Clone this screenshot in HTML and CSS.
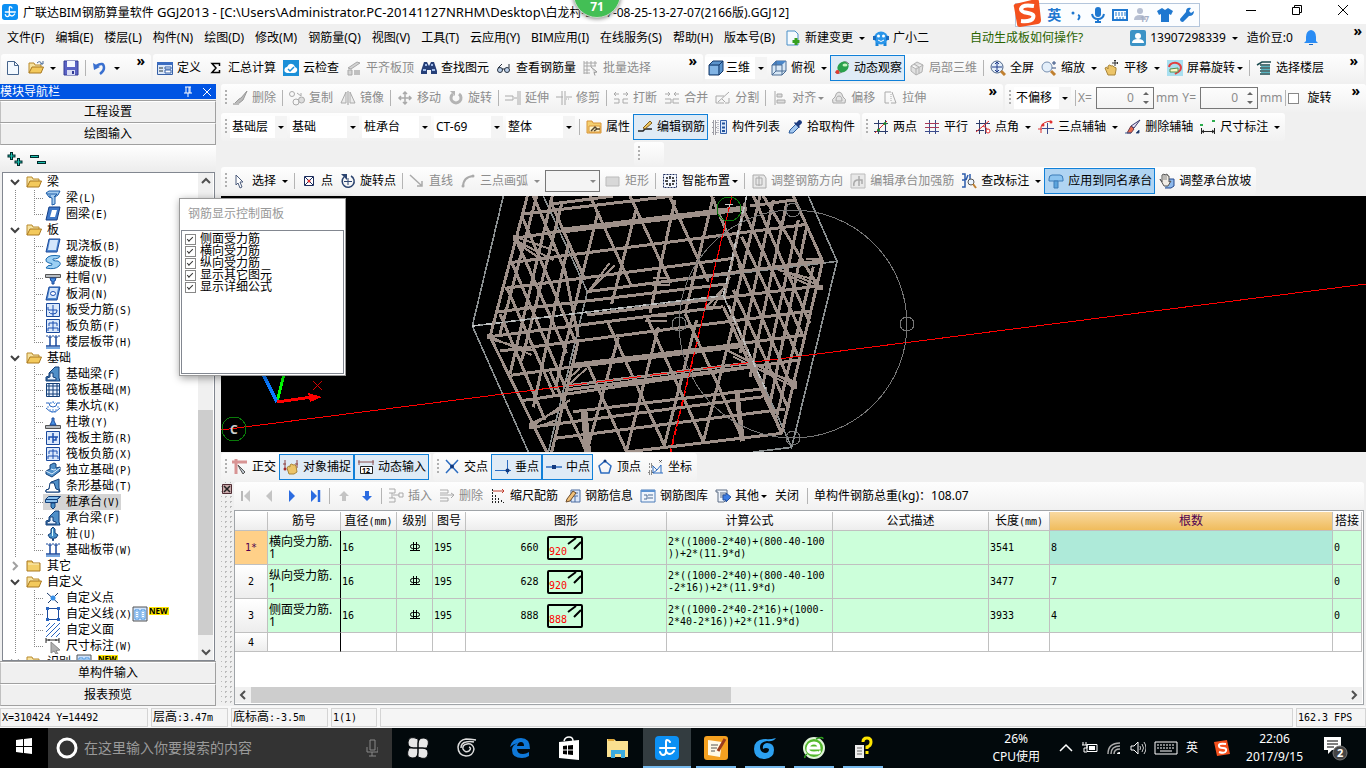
FILE: index.html
```html
<!DOCTYPE html>
<html lang="zh-CN">
<head>
    <meta charset="UTF-8">
    <meta name="viewport" content="width=device-width, initial-scale=1.0">
    <title>广联达BIM钢筋算量软件 GGJ2013</title>
    <link rel="stylesheet" href="styles.css">
</head>
<body>
    <svg class="defs" aria-hidden="true">
        <symbol id="folder" viewBox="0 0 16 16"><path d="M1 13V3h5l1 2h6v3" fill="#f7e3a0" stroke="#b98a2c"/><path d="M1 13l3-6h11.500l-2.500 6z" fill="#f3c95c" stroke="#a97820"/></symbol>
        <symbol id="folder-shut" viewBox="0 0 16 16"><path d="M1 13V3h5l1 2h7v8z" fill="#f3cf6a" stroke="#a97820"/><path d="M2 6h11" stroke="#fdf2c4"/></symbol>
        <symbol id="open" viewBox="0 0 10 10"><path d="M1 3l4 4 4-4" fill="none" stroke="#404040" stroke-width="2"/></symbol>
        <symbol id="shut" viewBox="0 0 10 10"><path d="M3 1l4 4-4 4" fill="none" stroke="#a0a0a0" stroke-width="2"/></symbol>
        <symbol id="slab" viewBox="0 0 16 16"><path d="M4 1h11l-3 13H1z" fill="#4f88d0" stroke="#1b4a9c"/><path d="M5 2h8l-2 10H3z" fill="#d4e6fb"/></symbol>
        <symbol id="strip" viewBox="0 0 16 16"><path d="M1 2h14" stroke="#1b4a9c" stroke-dasharray="2 1"/><path d="M1 12h14M5 3v9M11 3v9" stroke="#1b4a9c" stroke-width="1.500"/><path d="M3 3h4M9 3h4" stroke="#1b4a9c"/><path d="M1 14h14" stroke="#78a8e0" stroke-width="2"/></symbol>
        <symbol id="found-beam" viewBox="0 0 16 16"><path d="M1 15v-4l3-1V7l6-6h4v11l1 3z" fill="#4f8fc8" stroke="#123f78"/><path d="M2 14v-2l3-1V7h3v4l3 1v2z" fill="#eaf4ff" stroke="#123f78"/></symbol>
        <symbol id="rebar" viewBox="0 0 16 16"><path d="M1.500 1.500h13v13h-13z" fill="#dbe9fb" stroke="#1b4a9c"/><path d="M8 3v10M4 10V7h9M11 7v3H8" fill="none" stroke="#1b4fb0" stroke-width="1.500"/></symbol>
        <symbol id="rebar-neg" viewBox="0 0 16 16"><path d="M1.500 1.500h13v13h-13z" fill="#dbe9fb" stroke="#1b4a9c"/><path d="M8 3v10M4 5h8M3 10h10M4 5v3M12 5v3M3 10v3M13 10v3" fill="none" stroke="#1b4fb0"/></symbol>
        <symbol id="hatch" viewBox="0 0 16 16"><path d="M1 5l4-4M1 10l9-9M1 15L15 1M6 15l9-9M11 15l4-4" stroke="#2a66c0"/></symbol>
        <symbol id="new" viewBox="0 0 22 10"><path d="M1 1h20v8H1z" fill="#ffe600"/><text x="1" y="8" font-size="8" font-weight="bold">NEW</text></symbol>
        <symbol id="new-pages" viewBox="0 0 16 16"><path d="M1 1h14v14H1z" fill="#cfe2fa" stroke="#555"/><path d="M3 4h4v9H3zM9 4h4v9H9z" fill="#fff" stroke="#3a8ee0"/><path d="M5 5v7M11 5v7" stroke="#3a8ee0" stroke-dasharray="1 1"/></symbol>
        <symbol id="anchor" viewBox="0 0 24 24"><rect width="24" height="24" rx="4" fill="#0c90f4"/><path d="M15 6q-1-2-3-2-1 0-1 2v9q0 4-3 4-2 0-3-3M5 12h15M11 15q1 3 4 3 2 0 4-3" fill="none" stroke="#fff" stroke-width="2" stroke-linecap="round"/></symbol>
        <symbol id="grade" viewBox="0 0 12 12"><path d="M4.500 1v9M7.500 1v9M1 9.500h10" stroke="#000"/><rect x="1.500" y="3.500" width="9" height="4" rx="2" fill="none" stroke="#000"/></symbol>
    </svg>

    <header class="titlebar">
        <svg><use href="#anchor"/></svg>
        <h1>广联达BIM钢筋算量软件 <b>GGJ2013 - [C:\Users\Administrator.PC-20141127NRHM\Desktop\</b>白龙村-2017-08-25-13-27-07(2166版).GGJ12]</h1>
        <div class="window-buttons">
            <button aria-label="最小化"><svg viewBox="0 0 12 12"><path d="M1 6.500h10" stroke="#000"/></svg></button>
            <button aria-label="还原"><svg viewBox="0 0 12 12"><path d="M1.500 3.500h7v7h-7zM3.500 3V1.500h7v7H9" fill="none" stroke="#000"/></svg></button>
            <button aria-label="关闭"><svg viewBox="0 0 12 12"><path d="M1 1l10 10M11 1L1 11" stroke="#000"/></svg></button>
        </div>
    </header>
    <div class="speed-ball">71</div>
    <div class="ime-bar">
        <svg class="ime-logo" viewBox="0 0 28 28"><path d="M2 5L23 0q3 0 3 3l2 18q0 3-3 4L7 28q-3 0-3-3L1 8q-1-2 1-3z" fill="#f4511e"/><path d="M21 7q-12-2-13 3 0 3 7 4t5 5-12 3" fill="none" stroke="#fff" stroke-width="4"/></svg>
        <b>英</b>
        <svg viewBox="0 0 16 16"><circle cx="5" cy="6" r="1.500" fill="#1f78d0"/><path d="M10 8q3 1 0 5" fill="none" stroke="#1f78d0" stroke-width="2"/></svg>
        <svg viewBox="0 0 16 16"><rect x="5" y="0" width="6" height="10" rx="3" fill="#1f78d0"/><path d="M2 7q1 5 6 5t6-5M8 12v4M5 15h6" fill="none" stroke="#1f78d0" stroke-width="2"/></svg>
        <svg viewBox="0 0 16 16"><path d="M1 3h14v10H1z" fill="none" stroke="#1f78d0" stroke-width="2"/><path d="M3 6h11M3 8h11M4 11h8" stroke="#1f78d0" stroke-dasharray="2 1"/></svg>
        <svg viewBox="0 0 16 16"><circle cx="6" cy="4" r="3" fill="#b6bfd2"/><path d="M0 13q0-5 6-5t6 5z" fill="#b6bfd2"/><text x="6" y="15" font-size="8" font-weight="bold" fill="#a4afc6">17</text></svg>
        <svg viewBox="0 0 16 16"><path d="M5 1l3 2 3-2 5 3-2 4-2-1v8H4V7L2 8 0 4z" fill="#1f78d0"/></svg>
        <svg viewBox="0 0 16 16"><path d="M15 4l-3 2-2-2 2-3q-5-1-5 4L1 12q0 3 3 3l6-6q5 0 5-5z" fill="#1f78d0"/></svg>
    </div>

    <nav class="menubar">
        <button>文件(F)</button><button>编辑(E)</button><button>楼层(L)</button><button>构件(N)</button><button>绘图(D)</button><button>修改(M)</button><button>钢筋量(Q)</button><button>视图(V)</button><button>工具(T)</button><button>云应用(Y)</button><button>BIM应用(I)</button><button>在线服务(S)</button><button>帮助(H)</button><button>版本号(B)</button>
        <button class="tool"><svg viewBox="0 0 16 16"><path d="M2 1h8l3 3v11H2z" fill="#f4faff" stroke="#4a90c8"/><path d="M11 8v7M7.500 11.500h7" stroke="#35a020" stroke-width="3"/></svg>新建变更<i class="caret"></i></button>
        <button class="tool"><svg viewBox="0 0 16 16"><path d="M4 12v4M12 12v4" stroke="#1a84d8" stroke-width="3"/><ellipse cx="8" cy="8" rx="7" ry="6.500" fill="#2a96ea"/><path d="M0 6h3v4H0zM13 6h3v4h-3z" fill="#1a6cc0"/><circle cx="5.500" cy="6" r="1.500" fill="#fff"/><circle cx="10.500" cy="6" r="1.500" fill="#fff"/><path d="M5 10q3 3 6 0" fill="none" stroke="#fff"/></svg>广小二</button>
        <a class="tip" href="#">自动生成板如何操作?</a>
        <button class="tool"><svg viewBox="0 0 16 16"><rect width="16" height="16" rx="2" fill="#3c93c6"/><circle cx="8" cy="6" r="3" fill="#fff"/><path d="M2 13q0-4 6-4t6 4z" fill="#fff"/></svg>13907298339<i class="caret"></i></button>
        <button>造价豆:0</button>
        <button class="tool" aria-label="消息"><svg viewBox="0 0 16 16"><path d="M8 0q5 1 5 7v4l2 2H1l2-2V7q0-6 5-7z" fill="#2a8cf4"/><path d="M6 14h4v1H6z" fill="#1668c8"/></svg></button>
        <span class="more">»</span>
    </nav>

    <div class="top-row">
        <div class="toolbar file-bar">
            <button class="tool" aria-label="新建"><svg viewBox="0 0 16 16"><path d="M2.500 1.500h7l4 4v9h-11z" fill="#f3f9ff" stroke="#46648c"/><path d="M9.500 1.500v4h4" fill="none" stroke="#46648c"/></svg></button>
            <button class="tool" aria-label="打开"><svg viewBox="0 0 16 16"><use href="#folder"/><path d="M9 3q3-3 5 1M12 4h3V1" fill="none" stroke="#4a6a94"/></svg><i class="caret"></i></button>
            <button class="tool" aria-label="保存"><svg viewBox="0 0 16 16"><path d="M1 1h14v14H1z" fill="#5a62c4" stroke="#323a94"/><path d="M4 1h8v6H4z" fill="#f4f6ff"/><path d="M4 10h8v5H4z" fill="#d8dcf4"/><path d="M9 11h2v3H9z" fill="#323a94"/></svg></button>
            <i class="sep"></i>
            <button class="tool" aria-label="撤销"><svg viewBox="0 0 16 16"><path d="M4 6q8-5 8 2 0 3-4 6" fill="none" stroke="#3a70d0" stroke-width="2.500"/><path d="M1 3l1 7 6-3z" fill="#3a70d0"/></svg><i class="caret"></i></button>
            <span class="more">»</span>
        </div>
        <div class="toolbar build-bar">
            <button class="tool"><svg viewBox="0 0 16 16"><path d="M.5 2.500h15v12H.5z" fill="#dce8fa" stroke="#3560a8"/><path d="M0 2h16v3H0z" fill="#3b6cc0"/><path d="M2 8h4M2 11h4" stroke="#233"/><path d="M8 7h6v2H8zM8 10h6v3H8z" fill="#fff" stroke="#3560a8"/></svg>定义</button>
            <button class="tool"><svg viewBox="0 0 16 16"><path d="M11.500 6V3.500H4L8 8l-4 4.500h7.500V10" fill="none" stroke="#000" stroke-width="1.500"/></svg>汇总计算</button>
            <button class="tool"><svg viewBox="0 0 16 16"><rect width="16" height="16" fill="#1b8fd8"/><path d="M4 13q-4-1-2-5 1-1 2-1 2-4 5-3 2 0 3 3 3 1 2 4-1 2-3 2z" fill="#fff"/><path d="M5 9l2 2 4-4" fill="none" stroke="#1b8fd8" stroke-width="1.500"/></svg>云检查</button>
            <button class="tool" disabled><svg viewBox="0 0 16 16"><path d="M2 8l9-6 3 1-9 6zM2 10h4v5H2z" fill="#d4d4d4" stroke="#a8a8a8"/><path d="M8 10h6v5H8z" fill="#c0c0c0"/></svg>平齐板顶</button>
            <button class="tool"><svg viewBox="0 0 16 16"><path d="M3 2h3l2 4 2-4h3l3 9v3h-6v-4H6v4H0v-3z" fill="#263f78"/><path d="M2 10h3M11 10h3M4 5h2M10 5h2" stroke="#9cb8e8" stroke-width="2"/></svg>查找图元</button>
            <button class="tool"><svg viewBox="0 0 16 16"><circle cx="4" cy="10" r="2.500" fill="#bcd0ea" stroke="#26303e"/><circle cx="11" cy="10" r="2.500" fill="#bcd0ea" stroke="#26303e"/><path d="M6 9h3M2 8l4-4M13 8V4" fill="none" stroke="#26303e"/></svg>查看钢筋量</button>
            <button class="tool" disabled><svg viewBox="0 0 16 16"><path d="M1 1v13M4 1v13M8 1v6M12 1v5M1 3h13M1 6h12M1 10h6M1 13h6" stroke="#a8a8a8"/><path d="M8 7l6 5-3 .5 1 3" fill="#ddd" stroke="#999"/></svg>批量选择</button>
            <span class="more">»</span>
        </div>
        <div class="toolbar view-bar">
            <label class="combo with-icon"><svg viewBox="0 0 16 16"><path d="M1 5l4-4h10v10l-4 4H1z" fill="#5c94cc" stroke="#173a6a"/><path d="M2 6h8v8H2z" fill="#82b4e4"/><path d="M1 5h10l4-4M11 5v10" fill="none" stroke="#173a6a"/></svg><select aria-label="视图维度"><option>三维</option></select></label>
            <button class="tool"><svg viewBox="0 0 16 16"><path d="M1 5l4-4h10v10l-4 4H1z" fill="#d8e8f6" stroke="#4a6c94"/><path d="M1 5l4-4h10l-4 4z" fill="#4a86c8"/><path d="M1 5h10v10M5 1v10l-4 4M5 11h10" fill="none" stroke="#4a6c94"/></svg>俯视<i class="caret"></i></button>
            <button class="tool active"><svg viewBox="0 0 16 16"><path d="M1 12q4 3 8-1M8 3q4-3 7 1" fill="none" stroke="#777"/><ellipse cx="9" cy="7" rx="6" ry="5" transform="rotate(-40 9 7)" fill="#2aa04c"/><ellipse cx="11" cy="5" rx="2.500" ry="1.500" fill="#c4f4c0"/><circle cx="3.500" cy="12" r="2" fill="#e03c30"/></svg>动态观察</button>
            <button class="tool" disabled><svg viewBox="0 0 16 16"><path d="M2 6l6-4 6 3-1 7-6 3-5-4zM2 6l5 3 7-4M7 9v6M5 4l5 3v6" fill="#e0e0e0" stroke="#b0b0b0"/></svg>局部三维</button>
            <i class="sep"></i>
            <button class="tool"><svg viewBox="0 0 16 16"><circle cx="7" cy="7" r="6" fill="#e4effa" stroke="#4c6488"/><path d="M7 2v10M2 7h10M5 4l2-2 2 2M5 10l2 2 2-2" fill="none" stroke="#203c8c"/><path d="M11 11l4 4" stroke="#c08030" stroke-width="3"/></svg>全屏</button>
            <button class="tool"><svg viewBox="0 0 16 16"><circle cx="6" cy="7" r="5" fill="#e4effa" stroke="#7890b0"/><path d="M10 11l4 4" stroke="#c08030" stroke-width="3"/><path d="M11 3h4M13 1v4M11 8h4" stroke="#304c80"/></svg>缩放<i class="caret"></i></button>
            <button class="tool"><svg viewBox="0 0 16 16"><path d="M1 8q2-2 3 1V6q2-2 3 0 2-1 3 1 3 0 2 3l-1 5H4z" fill="#ecc468" stroke="#a88438"/><path d="M11 0v6M8 3h6M10 1l1-1 1 1M13 2l1 1-1 1" fill="none" stroke="#333"/></svg>平移<i class="caret"></i></button>
            <button class="tool"><svg viewBox="0 0 16 16"><path d="M0 0h16v16H0z" fill="#a8dff0"/><path d="M2 7a6 5 0 1 1 9 5l-3 2" fill="none" stroke="#e04040" stroke-width="2"/><path d="M3 9l8-1v4H3z" fill="#fff7c8" stroke="#57904c"/></svg>屏幕旋转<i class="caret tight"></i></button>
            <i class="sep"></i>
            <button class="tool"><svg viewBox="0 0 16 16"><path d="M1 5l5-3h9M4 5h10M4 8h10M4 11h10M4 14h10" fill="none" stroke="#1d4c50" stroke-width="1.500"/><path d="M5 6.500h9M5 9.500h9M5 12.500h9" stroke="#58b4c0"/></svg>选择楼层</button>
            <span class="more">»</span>
        </div>
    </div>

    <main>
        <aside class="nav-panel">
            <h2>模块导航栏<svg viewBox="0 0 32 12"><path d="M3 1h6M4 1v6M8 1v6M7 1v6M2 7h8M6 7v4" stroke="#fff"/><path d="M21 2l8 8M29 2l-8 8" stroke="#fff"/></svg></h2>
            <button class="module">工程设置</button>
            <button class="module">绘图输入</button>
            <div class="tree-tools">
                <button aria-label="展开"><svg viewBox="0 0 16 16"><path d="M4.500 1v8M.5 5h8M11.500 7v8M7.500 11h8" stroke="#002a2a" stroke-width="3"/><path d="M4.500 2v6M1.500 5h6M11.500 8v6M8.500 11h6" stroke="#1cc0b0"/></svg></button>
                <button aria-label="折叠"><svg viewBox="0 0 16 16"><path d="M0 5.500h9M7 11.500h9" stroke="#002a2a" stroke-width="3"/><path d="M1 5.500h7M8 11.500h7" stroke="#1cc0b0"/></svg></button>
            </div>
            <div class="tree-frame">
                <ul class="tree">
                    <li class="group"><svg class="fold"><use href="#open"/></svg><svg><use href="#folder"/></svg>梁</li>
                    <li><a href="#"><svg viewBox="0 0 16 16"><path d="M1 3l3-2h11l-2 4-3 2v7l-3 1V8L4 7z" fill="#a4ccf0" stroke="#1c5ca8"/><path d="M2 4h10l-3 3M5 5v3" fill="none" stroke="#1c5ca8"/></svg>梁<b>(L)</b></a></li>
                    <li class="end"><a href="#"><svg viewBox="0 0 16 16"><path d="M4 1h11l-3 13H1z" fill="#3f78c8" stroke="#123f88"/><path d="M7 4h5l-2 7H5z" fill="#fff"/></svg>圈梁<b>(E)</b></a></li>
                    <li class="group"><svg class="fold"><use href="#open"/></svg><svg><use href="#folder"/></svg>板</li>
                    <li><a href="#"><svg><use href="#slab"/></svg>现浇板<b>(B)</b></a></li>
                    <li><a href="#"><svg viewBox="0 0 16 16"><path d="M1 5q3-5 14-3-1 3-7 3-1 2 5 2 4 2 1 5-4 4-13 2 1-3 6-3 1-2-3-2-4-1-3-4z" fill="#9cd0f4" stroke="#1c6cb0"/></svg>螺旋板<b>(B)</b></a></li>
                    <li><a href="#"><svg viewBox="0 0 16 16"><path d="M0.500 4.500h15v3H.5z" fill="#b8bcc0" stroke="#555"/><path d="M5 8h6l-1 3H9v3H7v-3H6z" fill="#4890e0" stroke="#1b4a9c"/></svg>柱帽<b>(V)</b></a></li>
                    <li><a href="#"><svg viewBox="0 0 16 16"><use href="#slab"/><ellipse cx="8" cy="7.500" rx="2.500" ry="2" fill="#fff" stroke="#1b4fb0"/></svg>板洞<b>(N)</b></a></li>
                    <li><a href="#"><svg viewBox="0 0 16 16"><path d="M1.500 1.500h13v13h-13z" fill="#dbe9fb" stroke="#1b4a9c"/><path d="M8 3v11M3 5v3h9v1q0 3-4 3-3 0-4-2" fill="none" stroke="#1b4fb0"/></svg>板受力筋<b>(S)</b></a></li>
                    <li><a href="#"><svg><use href="#rebar-neg"/></svg>板负筋<b>(F)</b></a></li>
                    <li class="end"><a href="#"><svg><use href="#strip"/></svg>楼层板带<b>(H)</b></a></li>
                    <li class="group"><svg class="fold"><use href="#open"/></svg><svg><use href="#folder"/></svg>基础</li>
                    <li><a href="#"><svg><use href="#found-beam"/></svg>基础梁<b>(F)</b></a></li>
                    <li><a href="#"><svg viewBox="0 0 16 16"><path d="M1.500 1.500h13v13h-13z" fill="#e8f2ff" stroke="#123f78"/><path d="M4 2v12M8 2v12M12 2v12M2 4h12M2 8h12M2 12h12" stroke="#123f78"/></svg>筏板基础<b>(M)</b></a></li>
                    <li><a href="#"><svg viewBox="0 0 16 16"><path d="M1 5h3q0 4 4 4t4-4h3M1 10q7 8 14 0" fill="none" stroke="#2a66c0"/><path d="M3 8v3M4 12h9M6 14h5M13 8v3M5 4l1 2 2-3 1 3 2-2" fill="none" stroke="#5c94dc" stroke-dasharray="2 1"/></svg>集水坑<b>(K)</b></a></li>
                    <li><a href="#"><svg viewBox="0 0 16 16"><path d="M.5 11.500h15v3H.5z" fill="#b8bcc0" stroke="#555"/><path d="M7 4h2v3l2 4H5l2-4z" fill="#4890e0" stroke="#1b4a9c"/></svg>柱墩<b>(Y)</b></a></li>
                    <li><a href="#"><svg><use href="#rebar"/></svg>筏板主筋<b>(R)</b></a></li>
                    <li><a href="#"><svg><use href="#rebar-neg"/></svg>筏板负筋<b>(X)</b></a></li>
                    <li><a href="#"><svg viewBox="0 0 16 16"><path d="M1 9l4-2V3l4-2 2 1v4l4-1v4l-8 6-6-3z" fill="#4f8fc8" stroke="#123f78"/><path d="M1 9l6 3 8-6M6 7l3 1 2-1" fill="none" stroke="#e0f0ff"/></svg>独立基础<b>(P)</b></a></li>
                    <li><a href="#"><svg viewBox="0 0 16 16"><path d="M9 3l5-2v9l1 4H1v-2l3-1 2-7z" fill="#4f8fc8" stroke="#123f78"/><path d="M5 5h4l2 6 3 1v2H1v-2l3-1z" fill="#fff" stroke="#123f78"/></svg>条形基础<b>(T)</b></a></li>
                    <li><a class="selected" href="#"><svg viewBox="0 0 16 16"><path d="M.5 5.500l3-3h12l-3 3v3H.5z" fill="#8cc0ec" stroke="#123f78"/><path d="M1 5.500h11l3-3" fill="none" stroke="#123f78"/><path d="M6 9h4v4l-2 2-2-2z" fill="#4890c8" stroke="#123f78"/></svg>桩承台<b>(V)</b></a></li>
                    <li><a href="#"><svg><use href="#found-beam"/></svg>承台梁<b>(F)</b></a></li>
                    <li><a href="#"><svg viewBox="0 0 16 16"><path d="M6 3l2-2 2 2v4l3 2-2 3H9l-1 3-1-3H5L3 9l3-2z" fill="#4890c8" stroke="#123f78"/><path d="M7.500 3v7" stroke="#dff"/></svg>桩<b>(U)</b></a></li>
                    <li class="end"><a href="#"><svg><use href="#strip"/></svg>基础板带<b>(W)</b></a></li>
                    <li class="group"><svg class="fold"><use href="#shut"/></svg><svg><use href="#folder-shut"/></svg>其它</li>
                    <li class="group"><svg class="fold"><use href="#open"/></svg><svg><use href="#folder"/></svg>自定义</li>
                    <li><a href="#"><svg viewBox="0 0 16 16"><path d="M2 3l11 10M13 3L3 13" stroke="#1c3c6c"/><circle cx="8" cy="8" r="2.500" fill="#3890e8"/></svg>自定义点</a></li>
                    <li><a href="#"><svg viewBox="0 0 16 16"><path d="M2.500 2.500h11v11h-11z" fill="#fff" stroke="#1b4a9c"/><path d="M1 1h3v3H1zM12 1h3v3h-3zM1 12h3v3H1zM12 12h3v3h-3z" fill="#2a66c0"/></svg>自定义线<b>(X)</b><svg><use href="#new-pages"/></svg><svg class="new"><use href="#new"/></svg></a></li>
                    <li><a href="#"><svg><use href="#hatch"/></svg>自定义面</a></li>
                    <li class="end"><a href="#"><svg viewBox="0 0 16 16"><path d="M1 0v5M14 0v5M1 2h13M4 1v2M11 1v2" stroke="#222"/><path d="M6 4l9 8-4 .5 2 3.500-2 0-2-3-3 2z" fill="#b0b0b0" stroke="#888"/></svg>尺寸标注<b>(W)</b></a></li>
                    <li class="group"><svg class="fold"><use href="#open"/></svg><svg><use href="#folder"/></svg>识别<svg><use href="#new-pages"/></svg><svg class="new"><use href="#new"/></svg></li>
                </ul>
                <div class="v-scroll">
                    <svg viewBox="0 0 16 16"><path d="M4 10l4-4 4 4" fill="none" stroke="#505050" stroke-width="2"/></svg>
                    <span></span>
                    <svg viewBox="0 0 16 16"><path d="M4 6l4 4 4-4" fill="none" stroke="#505050" stroke-width="2"/></svg>
                </div>
            </div>
            <button class="module">单构件输入</button>
            <button class="module">报表预览</button>
        </aside>

        <section class="work">
            <div class="bar-row">
                <div class="toolbar grow">
                    <i class="grip"></i>
                    <button class="tool" disabled><svg viewBox="0 0 16 16"><path d="M15 1L9 8l-2 1-4 4 3 1 5-4z" fill="#bbb" stroke="#999"/><path d="M1 14h6" stroke="#bbb" stroke-width="2"/></svg>删除</button>
                    <i class="sep"></i>
                    <button class="tool" disabled><svg viewBox="0 0 16 16"><circle cx="3" cy="4" r="2.500" fill="none" stroke="#aaa"/><circle cx="7" cy="12" r="3" fill="none" stroke="#aaa"/><circle cx="12.500" cy="10" r="3" fill="#ddd" stroke="#aaa"/><path d="M8 3l4 3v-3" fill="none" stroke="#aaa"/></svg>复制</button>
                    <button class="tool" disabled><svg viewBox="0 0 16 16"><path d="M6 2v11H1zM10 2v11h5z" fill="#ececec" stroke="#aaa"/><path d="M8 1v14" stroke="#999"/></svg>镜像</button>
                    <i class="sep"></i>
                    <button class="tool" disabled><svg viewBox="0 0 16 16"><path d="M8 2v12M2 8h12M6 4l2-2 2 2M6 12l2 2 2-2M4 6L2 8l2 2M12 6l2 2-2 2" fill="none" stroke="#aaa" stroke-width="1.500"/></svg>移动</button>
                    <button class="tool" disabled><svg viewBox="0 0 16 16"><path d="M5 4a5 5 0 1 0 6 0" fill="none" stroke="#b4b4b4" stroke-width="3"/><path d="M2 1h5v5z" fill="#b4b4b4"/></svg>旋转</button>
                    <i class="sep"></i>
                    <button class="tool" disabled><svg viewBox="0 0 16 16"><path d="M0 6h8v4H0M9 8h3M13 1v14M15 1v14" fill="none" stroke="#aaa"/></svg>延伸</button>
                    <button class="tool" disabled><svg viewBox="0 0 16 16"><path d="M0 7h7M10 7h6M6 1v14M9 1v14" stroke="#aaa"/><path d="M10 9h4" stroke="#aaa" stroke-dasharray="1 1"/></svg>修剪</button>
                    <i class="sep"></i>
                    <button class="tool" disabled><svg viewBox="0 0 16 16"><path d="M1 4h5M10 4h5M3 2L1 4l2 2M13 2l2 2-2 2M1 9h5v4H1M15 9h-5v4h5" fill="none" stroke="#aaa"/></svg>打断</button>
                    <button class="tool" disabled><svg viewBox="0 0 16 16"><path d="M1 4h5M10 4h5M4 2l2 2-2 2M12 2l-2 2 2 2M1 9h6v4H1M15 9H9v4h6" fill="none" stroke="#aaa"/></svg>合并</button>
                    <button class="tool" disabled><svg viewBox="0 0 16 16"><path d="M1 6h8M1 6v7h8M14 8v5h-4M3 12L14 2M7 9l3 3" fill="none" stroke="#aaa"/></svg>分割</button>
                    <i class="sep"></i>
                    <button class="tool" disabled><svg viewBox="0 0 16 16"><path d="M3 1v14" stroke="#aaa"/><path d="M5 4h5v3H5zM5 10h8v3H5z" fill="#ddd" stroke="#aaa"/></svg>对齐<i class="caret tight"></i></button>
                    <button class="tool" disabled><svg viewBox="0 0 16 16"><path d="M2 13q-2-4 2-6 1-5 4-5t4 5q4 2 2 6z" fill="#e4e4e4" stroke="#aaa"/><path d="M5 11q0-5 3-5t3 5z" fill="none" stroke="#aaa"/></svg>偏移</button>
                    <button class="tool" disabled><svg viewBox="0 0 16 16"><path d="M9 2H3v11h4M9 13h5M10 2l4 11" fill="none" stroke="#aaa"/><path d="M9 4v8" stroke="#aaa" stroke-dasharray="1 1"/></svg>拉伸</button>
                    <span class="more">»</span>
                </div>
                <div class="toolbar offset-bar">
                    <i class="grip"></i>
                    <span class="combo narrow"><select aria-label="偏移方式"><option>不偏移</option></select></span>
                    <i class="sep"></i>
                    <label for="off-x">X=</label>
                    <span class="spin"><input id="off-x" value="0" disabled><svg viewBox="0 0 8 16"><path d="M1 5l3-3 3 3zM1 11l3 3 3-3z" fill="#666"/></svg></span>
                    <span class="unit">mm</span>
                    <label for="off-y">Y=</label>
                    <span class="spin"><input id="off-y" value="0" disabled><svg viewBox="0 0 8 16"><path d="M1 5l3-3 3 3zM1 11l3 3 3-3z" fill="#666"/></svg></span>
                    <span>mm</span>
                    <i class="sep"></i>
                    <label class="rotate"><input type="checkbox">旋转</label>
                    <span class="more">»</span>
                </div>
            </div>
            <div class="bar-row">
                <div class="toolbar">
                    <i class="grip"></i>
                    <span class="combo narrow"><select aria-label="楼层"><option>基础层</option></select></span>
                    <span class="combo"><select aria-label="构件类别"><option>基础</option></select></span>
                    <span class="combo"><select aria-label="构件类型"><option>桩承台</option></select></span>
                    <span class="combo"><select aria-label="构件"><option>CT-69</option></select></span>
                    <span class="combo"><select aria-label="单元"><option>整体</option></select></span>
                    <i class="sep"></i>
                    <button class="tool"><svg viewBox="0 0 16 16"><path d="M1 2h5l1 2h8v10H1z" fill="#f4d070" stroke="#d89438"/><path d="M3 7h11v6H3z" fill="#fff4c8" stroke="#d89438"/><path d="M5 12l4-4 2 2h3M8 12l3-2" fill="none" stroke="#54442c" stroke-width="1.500"/></svg>属性</button>
                    <button class="tool active"><svg viewBox="0 0 16 16"><path d="M1 12h5l2-2h7" fill="none" stroke="#222" stroke-width="1.500"/><path d="M6 9l7-7 2 2-7 6z" fill="#f0c860" stroke="#7c5c20"/></svg>编辑钢筋</button>
                    <button class="tool"><svg viewBox="0 0 16 16"><path d="M1 2h3v3H1zM1 7h3v3H1zM1 12h3v3H1z" fill="none" stroke="#445" stroke-dasharray="1 1"/><path d="M6 1v14" stroke="#889" stroke-dasharray="1 1"/><path d="M8.500 1.500h6v13h-6z" fill="#dce8fa" stroke="#3560a8"/><path d="M10 4.500h3M10 8.500h3M10 12h3" stroke="#23539c" stroke-width="2"/></svg>构件列表</button>
                    <button class="tool"><svg viewBox="0 0 16 16"><path d="M2 14l1-3 6-6 3 3-6 6z" fill="#a4c8f0" stroke="#2c5c9c"/><path d="M9 4l3-3q3 0 3 3l-3 3 1 1-1 1-5-5 1-1z" fill="#1c3c80"/></svg>拾取构件</button>
                </div>
                <div class="toolbar">
                    <i class="grip"></i>
                    <button class="tool"><svg viewBox="0 0 16 16"><path d="M5.500 1v14M12.500 1v14M1 4.500h14M1 12.500h14" stroke="#2c3c6c"/><path d="M2 14L14 2" stroke="#e02c2c"/><circle cx="5.500" cy="11" r="1.500" fill="#1c8c2c"/><circle cx="12" cy="4.500" r="1.500" fill="#1c8c2c"/></svg>两点</button>
                    <button class="tool"><svg viewBox="0 0 16 16"><path d="M5.500 1v14M11.500 1v14M1 12.500h14" stroke="#3c4c8c"/><path d="M1 4.500h14M1 8.500h14" stroke="#a83858"/></svg>平行</button>
                    <button class="tool"><svg viewBox="0 0 16 16"><path d="M4.500 1v14M10.500 1v14M1 4.500h14M1 11.500h8" stroke="#2c3c6c"/><path d="M1 13L14 2M8 7q4 1 5 5" fill="none" stroke="#e02c2c"/><circle cx="13" cy="12" r="2" fill="#fff" stroke="#e02c2c"/></svg>点角<i class="caret"></i></button>
                    <button class="tool"><svg viewBox="0 0 16 16"><path d="M9.500 4v11M4 9.500h12" stroke="#3c4c8c"/><path d="M3 14V8q1-5 10-6M0 10h4" fill="none" stroke="#d83030"/><circle cx="13" cy="3" r="1.500" fill="#e03030"/><circle cx="5" cy="6" r="1.500" fill="#e03030"/></svg>三点辅轴<i class="caret"></i></button>
                    <button class="tool"><svg viewBox="0 0 16 16"><path d="M15 1L9 9 6 7z" fill="#e8e0f4" stroke="#3c3c6c"/><path d="M6 7l3 3-3 4-4 0z" fill="#e86c50" stroke="#6c3c4c"/><path d="M0 14h6M11 14l3-3v3z" stroke="#3c5c94"/></svg>删除辅轴</button>
                    <button class="tool"><svg viewBox="0 0 16 16"><path d="M1.500 9v6M14.500 9v6M2 12.500h12M4 11l-2 1.500 2 1.500M12 11l2 1.500-2 1.500" fill="none" stroke="#222"/><path d="M0 5h3v2H0zM12 1h3v2h-3z" fill="#2cac4c"/></svg>尺寸标注<i class="caret"></i></button>
                </div>
            </div>
            <div class="bar-row blank-row"><div class="toolbar"><i class="grip"></i></div></div>
            <div class="bar-row">
                <div class="toolbar">
                    <i class="grip"></i>
                    <button class="tool"><svg viewBox="0 0 16 16"><path d="M4 2l7 7H8l2 5-2 1-2-5-2 2z" fill="#fff" stroke="#4c5c7c"/></svg>选择<i class="caret"></i></button>
                    <i class="sep"></i>
                    <button class="tool"><svg viewBox="0 0 16 16"><path d="M3.500 3.500h9v9h-9z" fill="#fff" stroke="#1c2c5c"/><path d="M4 4l8 8M12 4l-8 8" stroke="#1c2c5c"/><circle cx="8" cy="8" r="1.500" fill="#e02c2c"/></svg>点</button>
                    <button class="tool"><svg viewBox="0 0 16 16"><path d="M11 3a6 6 0 1 1-7 1" fill="none" stroke="#2c4470" stroke-width="1.500"/><path d="M1 1h6v6z" fill="#2c4470"/><path d="M8 5v7M4 8.500h8" stroke="#2c4470"/></svg>旋转点</button>
                    <i class="sep"></i>
                    <button class="tool" disabled><svg viewBox="0 0 16 16"><path d="M1 2l12 11M13 8v5H8" fill="none" stroke="#aaa" stroke-width="1.500"/></svg>直线</button>
                    <button class="tool" disabled><svg viewBox="0 0 16 16"><path d="M3 14Q3 4 13 3" fill="none" stroke="#aaa" stroke-width="2"/><circle cx="3" cy="13" r="1.500" fill="#aaa"/><circle cx="13" cy="3" r="1.500" fill="#aaa"/></svg>三点画弧<i class="caret"></i></button>
                    <span class="combo boxed"><select aria-label="弧参数" disabled><option></option></select></span>
                    <button class="tool" disabled><svg viewBox="0 0 16 16"><path d="M1 4h13v9H1z" fill="#d8d8d8" stroke="#bbb"/></svg>矩形</button>
                    <i class="sep"></i>
                    <button class="tool"><svg viewBox="0 0 16 16"><path d="M1.500 1.500h13v13h-13z" fill="#f4f8ff" stroke="#1c2c5c" stroke-dasharray="2 1"/><path d="M8 3v3M8 10v3M3 8h3M10 8h3M4 5h2M10 5h2M4 11h2M10 11h2" stroke="#111" stroke-width="1.500"/></svg>智能布置<i class="caret tight"></i></button>
                    <i class="sep"></i>
                    <button class="tool" disabled><svg viewBox="0 0 16 16"><path d="M2 2h11l2 3v10H2z" fill="#e8e8e8" stroke="#aaa"/><path d="M5 5h6v7H5zM8 3v10" fill="none" stroke="#aaa"/></svg>调整钢筋方向</button>
                    <button class="tool" disabled><svg viewBox="0 0 16 16"><path d="M1 1h14v14H1z" fill="#e8e8e8" stroke="#bbb"/><path d="M9 3v10M4 13q-1-5 3-6h5v4" fill="none" stroke="#aaa" stroke-width="1.500"/></svg>编辑承台加强筋</button>
                    <button class="tool"><svg viewBox="0 0 16 16"><path d="M1 1h3v13H1M4 7H1M7 2l-2 5M9 1v5" fill="none" stroke="#2c5cac" stroke-width="1.500"/><circle cx="10" cy="9" r="3" fill="#eaf4ff" stroke="#555"/><path d="M12 11l3 4" stroke="#c08030" stroke-width="2"/></svg>查改标注<i class="caret"></i></button>
                    <button class="tool checked"><svg viewBox="0 0 16 16"><path d="M1 6q0-4 3-4h8q3 0 3 4v2H1z" fill="#8cc4f0" stroke="#3c7cb8"/><path d="M6 8h4v7H6z" fill="#5ca4dc" stroke="#3c7cb8"/></svg>应用到同名承台</button>
                    <button class="tool"><svg viewBox="0 0 16 16"><path d="M9 6h6v7l-3 2H6" fill="#8cb8ec" stroke="#24488c"/><path d="M1 6l2 3V2l2-1 1 1 2-1 1 2 1 0v6l2-1-3 5H5z" fill="#f0ece4" stroke="#555"/><path d="M5 2v5M7 2v5" stroke="#888"/></svg>调整承台放坡</button>
                </div>
            </div>

            <svg class="canvas" viewBox="221 196 1145 256" preserveAspectRatio="xMinYMin slice" shape-rendering="crispEdges" fill="none">
                <!-- grid axes -->
                <g stroke="#f00">
                    <path d="M221 430L1366 284"/>
                    <path d="M732 196L670 452"/>
                </g>
                <!-- pile cap outline -->
                <g transform="translate(440 190) scale(.33333)">
                    <path d="M190 18L97 408 265 786M97 408L850 317 1055 772 1191 214 1105 18M850 317L920 18M1055 772L940 786M310 18L442 305 325 786M442 305L1191 214" stroke="#8a8f90" stroke-width="5"/>
                    <!-- rebar cage -->
                    <g stroke="#9e9089" stroke-width="9">
                        <path d="M262 18L150 440 320 786M1060 18L1148 214 1025 730"/>
                        <path d="M335 42L520 18M245 72L700 18M210 218L1100 103M195 295L880 205M442 305L1148 212M175 365L860 282M440 375L1135 288M150 440L850 350M180 483L1110 363M212 556L1090 435M245 632L1075 510M375 600L930 530M375 588L920 520M270 712L970 620M400 665L980 595M345 745L1035 657M560 786L1025 730M930 48L1062 30"/>
                        <path d="M365 122L920 54M400 527L910 465" stroke-width="17"/>
                        <path d="M225 145L370 122"/>
                        <path d="M450 18L575 290M570 18L692 280M688 18L805 275M815 18L910 245M445 528L560 786M500 390L675 770M620 380L790 755M735 370L907 745M850 350L1023 725"/>
                        <path d="M475 62L425 262M590 52L515 342M705 30L630 370M820 20L735 370M915 40L850 330M415 452L335 786M535 442L440 786M655 412L560 780M770 390L672 770M880 400L790 755"/>
                        <path d="M290 18L180 432M337 18L210 552M365 42L245 512M385 162L280 652M425 262L345 600"/>
                        <path d="M280 18L375 242 415 442M330 30L435 270M245 77L405 452M225 142L380 490M215 217L375 590M200 292L345 620M180 372L315 690M330 545L440 786"/>
                        <path d="M940 18L1110 400M970 18L1135 290M910 60L1090 440M905 140L1075 500M895 220L1055 590M880 300L1045 655M865 345L1025 730"/>
                        <path d="M960 18L870 400M1000 30L900 490M1040 40L930 560M1075 90L965 600M1100 110L990 640M1120 230L1010 680"/>
                    </g>
                    <g stroke="#9e9089" stroke-width="6">
                        <path d="M225 150L340 210M230 142L355 185M225 155L300 205M445 305L508 220M450 300L525 226M640 265H690M635 285H690M610 378H680M615 392H680M1010 235L1135 285M1030 250L1130 295M1015 240L1130 270M1098 206H1150M1098 220H1150M150 440L275 495M160 450L280 482M180 480H280M860 480L1060 580M880 500L1060 590M960 540L1065 575M275 710L390 630M275 700L380 650M280 715L350 690M380 590L440 535M370 580L420 535M855 290L800 350M870 260L820 350M830 350H800"/>
                        <path d="M432 660L443 786" stroke-width="20"/>
                        <path d="M890 600L907 754" stroke-width="15"/>
                        <path d="M228 136V154M150 432V448M1140 285V300M275 700V716M1062 572V596" stroke-width="18"/>
                    </g>
                    <path d="M97 408L850 317 980 605M850 317L920 18" stroke="#c0c2c2" stroke-width="5" stroke-dasharray="22 14"/>
                </g>
                <path d="M732 196L671 452" stroke="#f00" stroke-dasharray="6 4"/>
                <path d="M221 430L1366 284" stroke="#f00" stroke-dasharray="18 9"/>
                <!-- orbit control -->
                <g stroke="#777">
                    <circle cx="793" cy="324" r="114"/>
                    <circle cx="907" cy="324" r="7"/>
                    <circle cx="793" cy="438" r="7"/>
                    <circle cx="679" cy="324" r="7"/>
                    <circle cx="793" cy="210" r="7"/>
                </g>
                <!-- axis bubbles -->
                <circle cx="234" cy="429" r="12" stroke="#0a7a0a"/>
                <text x="230" y="434" fill="#ccc" font-size="12" font-weight="bold">C</text>
                <circle cx="729" cy="209" r="12" stroke="#0a7a0a"/>
                <path d="M725 204h8M729 204v3" stroke="#ccc"/>
                <!-- coordinate tripod -->
                <path d="M277 402L284 374" stroke="#0f0" stroke-width="3"/>
                <path d="M277 402L263 374" stroke="#0a7aff" stroke-width="4"/>
                <path d="M277 402L312 397" stroke="#f00" stroke-width="3"/>
                <path d="M308 393L322 397 310 402z" fill="#f00"/>
                <path d="M313 381l9 9M322 381l-9 9" stroke="#d00"/>
            </svg>

            <div class="bar-row snap-row">
                <div class="toolbar">
                    <i class="grip"></i>
                    <button class="tool"><svg viewBox="0 0 16 16"><path d="M0 3h15M4 0v15" stroke="#d89494" stroke-width="3"/><path d="M6 6l7 7-2 2-3-5z" fill="#c0c8d0" stroke="#555"/></svg>正交</button>
                    <button class="tool active"><svg viewBox="0 0 16 16"><path d="M2 1v9M14 1v8M0 5h3M12 5h3" stroke="#8c4040"/><path d="M4 9q1-3 3-1V6q2-2 3 0 2-1 3 1l1 6-3 2H6z" fill="#ecc468" stroke="#a88438"/><circle cx="2" cy="10" r="1.500" fill="#a02c2c"/></svg>对象捕捉</button>
                    <button class="tool active"><svg viewBox="0 0 16 16"><path d="M0 3h16M1 1v5M15 1v5" stroke="#8c5050"/><path d="M2.500 7.500h12v7h-12z" fill="#fff" stroke="#222"/><text x="4" y="14" font-size="7" font-weight="bold" fill="#000">12</text></svg>动态输入</button>
                </div>
                <div class="toolbar">
                    <i class="grip"></i>
                    <button class="tool"><svg viewBox="0 0 16 16"><path d="M2 1l12 13M14 1L2 14" stroke="#2c6cc0" stroke-width="1.500"/><circle cx="8" cy="7.500" r="2" fill="#123a80"/></svg>交点</button>
                    <button class="tool active"><svg viewBox="0 0 16 16"><path d="M12.500 1v14M0 11.500h16" stroke="#2c6cc0"/><circle cx="12.500" cy="11.500" r="2" fill="#123a80"/></svg>垂点</button>
                    <button class="tool active"><svg viewBox="0 0 16 16"><path d="M0 8h16" stroke="#2c6cc0" stroke-width="1.500"/><path d="M6 6h4v4H6z" fill="#123a80"/></svg>中点</button>
                    <button class="tool"><svg viewBox="0 0 16 16"><path d="M8 2l6 5-2 7H4L2 7z" fill="none" stroke="#2c6cc0" stroke-width="1.500"/><circle cx="8" cy="2" r="1.500" fill="#123a80"/></svg>顶点</button>
                    <button class="tool"><svg viewBox="0 0 16 16"><path d="M5 7v7h10M5 7l4 4 4-5v8M5 14l4-3" fill="none" stroke="#2c6cc0"/><path d="M1 5h3v3H1M11 1l3 3M14 1l-3 3M1 12h3v3H1z" fill="none" stroke="#222" stroke-dasharray="1 1"/></svg>坐标</button>
                </div>
            </div>

            <section class="rebar-panel">
                <div class="gutter"><button aria-label="关闭面板"><svg viewBox="0 0 10 10"><path d="M.5.5h9v9h-9z" fill="#c8a8a8" stroke="#502c34"/><path d="M2 2l6 6M8 2L2 8" stroke="#222" stroke-width="1.500"/></svg></button></div>
                <div class="rebar-body">
                    <div class="toolbar">
                        <button class="tool" disabled aria-label="首行"><svg viewBox="0 0 16 16"><path d="M4 3v10" stroke="#b8b8b8" stroke-width="2"/><path d="M12 2v12L6 8z" fill="#c4c4c4"/></svg></button>
                        <button class="tool" disabled aria-label="上一行"><svg viewBox="0 0 16 16"><path d="M11 2v12L5 8z" fill="#c4c4c4"/></svg></button>
                        <button class="tool" aria-label="下一行"><svg viewBox="0 0 16 16"><path d="M5 2v12l6-6z" fill="#2c6ce0"/></svg></button>
                        <button class="tool" aria-label="末行"><svg viewBox="0 0 16 16"><path d="M4 2v12l6-6z" fill="#2c6ce0"/><path d="M12 2v12" stroke="#2c6ce0" stroke-width="2.500"/></svg></button>
                        <i class="sep"></i>
                        <button class="tool" disabled aria-label="上移"><svg viewBox="0 0 16 16"><path d="M8 3l5 5h-3v5H6V8H3z" fill="#c4c4c4"/></svg></button>
                        <button class="tool" aria-label="下移"><svg viewBox="0 0 16 16"><path d="M8 13L3 8h3V3h4v5h3z" fill="#2c6ce0"/></svg></button>
                        <i class="sep"></i>
                        <button class="tool" disabled><svg viewBox="0 0 16 16"><path d="M1 1h6v4H1M1 14h6v-4H1M4 5v5M5 7h6M11 5h4v4h-4z" fill="none" stroke="#aaa"/></svg>插入</button>
                        <button class="tool" disabled><svg viewBox="0 0 16 16"><path d="M1 2h8v3H1M1 7h14M1 13h8v-3H1M12 5l3 2-3 3" fill="none" stroke="#aaa"/></svg>删除</button>
                        <button class="tool"><svg viewBox="0 0 16 16"><path d="M2.500 1v14M5.500 7v8M8.500 10v5M11.500 12v3M13.500 14v1" stroke="#222" stroke-dasharray="2 1"/><path d="M3 3h11M12 1l2 2-2 2" fill="none" stroke="#c03c2c"/></svg>缩尺配筋</button>
                        <button class="tool"><svg viewBox="0 0 16 16"><path d="M6 2h9v12H6z" fill="#dce8fa" stroke="#4c6ca0"/><path d="M8 5h5M8 8h5M10 8v6" stroke="#4c6ca0"/><path d="M2 11l6-8 3 2-6 8-4 1z" fill="#f0c078" stroke="#6c4c2c"/></svg>钢筋信息</button>
                        <button class="tool"><svg viewBox="0 0 16 16"><path d="M1 2h14v12H1z" fill="#eef4fc" stroke="#4c7cb8"/><path d="M1 2h14v2H1z" fill="#5c94d4"/><path d="M4 7h3v4H4M8 7h5M8 10h5" fill="none" stroke="#4c6c94"/></svg>钢筋图库</button>
                        <button class="tool"><svg viewBox="0 0 16 16"><path d="M1 2h11v9l-3 3H3V4H1z" fill="#eef4fc" stroke="#5c6c84"/><path d="M5 5h6M5 7h5M5 9h3" stroke="#5c6c84"/><path d="M8 7h3V5l5 4-5 5v-2H8z" fill="#3c7ce4" stroke="#24509c"/></svg>其他<i class="caret tight"></i></button>
                        <button class="tool plain">关闭</button>
                        <i class="sep"></i>
                        <span class="total">单构件钢筋总重(kg)：108.07</span>
                    </div>
                    <div class="grid-frame">
                        <table>
                            <colgroup><col class="c-row"><col class="c-name"><col class="c-dia"><col class="c-grade"><col class="c-fig"><col class="c-shape"><col class="c-formula"><col class="c-desc"><col class="c-len"><col class="c-count"><col></colgroup>
                            <thead>
                                <tr><th></th><th>筋号</th><th>直径<b>(mm)</b></th><th>级别</th><th>图号</th><th>图形</th><th>计算公式</th><th>公式描述</th><th>长度<b>(mm)</b></th><th class="current">根数</th><th>搭接</th></tr>
                            </thead>
                            <tbody>
                                <tr><th class="current">1*</th><td class="name">横向受力筋.<br>1</td><td class="mono">16</td><td class="center"><svg class="grade"><use href="#grade"/></svg></td><td class="mono">195</td><td><div class="shape">660<svg viewBox="0 0 36 24"><path d="M1 2q0-1 1-1h32q1 0 1 1v20q0 1-1 1H2q-1 0-1-1zM21 8l8-6M27 13l7-7" fill="none" stroke="#000" stroke-width="2"/><text x="2" y="19" fill="red">920</text></svg></div></td><td class="mono">2*((1000-2*40)+(800-40-100<br>))+2*(11.9*d)</td><td></td><td class="mono">3541</td><td class="mono picked">8</td><td class="mono">0</td></tr>
                                <tr><th>2</th><td class="name">纵向受力筋.<br>1</td><td class="mono">16</td><td class="center"><svg class="grade"><use href="#grade"/></svg></td><td class="mono">195</td><td><div class="shape">628<svg viewBox="0 0 36 24"><path d="M1 2q0-1 1-1h32q1 0 1 1v20q0 1-1 1H2q-1 0-1-1zM21 8l8-6M27 13l7-7" fill="none" stroke="#000" stroke-width="2"/><text x="2" y="19" fill="red">920</text></svg></div></td><td class="mono">2*((1000-2*40)+(800-40-100<br>-2*16))+2*(11.9*d)</td><td></td><td class="mono">3477</td><td class="mono">7</td><td class="mono">0</td></tr>
                                <tr><th>3</th><td class="name">侧面受力筋.<br>1</td><td class="mono">16</td><td class="center"><svg class="grade"><use href="#grade"/></svg></td><td class="mono">195</td><td><div class="shape">888<svg viewBox="0 0 36 24"><path d="M1 2q0-1 1-1h32q1 0 1 1v20q0 1-1 1H2q-1 0-1-1zM21 8l8-6M27 13l7-7" fill="none" stroke="#000" stroke-width="2"/><text x="2" y="19" fill="red">888</text></svg></div></td><td class="mono">2*((1000-2*40-2*16)+(1000-<br>2*40-2*16))+2*(11.9*d)</td><td></td><td class="mono">3933</td><td class="mono">4</td><td class="mono">0</td></tr>
                                <tr class="blank"><th>4</th><td></td><td></td><td></td><td></td><td></td><td></td><td></td><td></td><td></td><td></td></tr>
                            </tbody>
                        </table>
                        <div class="h-scroll">
                            <svg viewBox="0 0 16 16"><path d="M10 4L6 8l4 4" fill="none" stroke="#505050" stroke-width="2"/></svg>
                            <span></span>
                            <svg viewBox="0 0 16 16"><path d="M6 4l4 4-4 4" fill="none" stroke="#505050" stroke-width="2"/></svg>
                        </div>
                    </div>
                </div>
            </section>
        </section>
    </main>

    <section class="float-panel">
        <h2>钢筋显示控制面板</h2>
        <div class="checks">
            <label><input type="checkbox" checked>侧面受力筋</label>
            <label><input type="checkbox" checked>横向受力筋</label>
            <label><input type="checkbox" checked>纵向受力筋</label>
            <label><input type="checkbox" checked>显示其它图元</label>
            <label><input type="checkbox" checked>显示详细公式</label>
        </div>
    </section>

    <footer class="statusbar">
        <span class="coords"><b>X=310424 Y=14492</b></span>
        <span class="floor">层高<b>:3.47m</b></span>
        <span class="base">底标高<b>:-3.5m</b></span>
        <span class="count"><b>1(1)</b></span>
        <span class="message"></span>
        <span class="fps"><b>162.3 FPS</b></span>
    </footer>

    <footer class="taskbar">
        <button class="start" aria-label="开始"><svg viewBox="0 0 16 16"><path d="M0 2l7-1v7H0zM8 1l8-1v8H8zM0 9h7v6l-7-1zM8 9h8v7l-8-1z" fill="#fff"/></svg></button>
        <div class="search">
            <svg class="ring" viewBox="0 0 22 22"><circle cx="11" cy="11" r="9" fill="none" stroke="#fff" stroke-width="3"/></svg>
            <input type="text" placeholder="在这里输入你要搜索的内容" aria-label="搜索">
            <svg class="mic" viewBox="0 0 12 18"><path d="M4 1h5v10H4zM1 8v5h11V8M6 13v4M3 17h7" fill="none" stroke="#888"/></svg>
        </div>
        <nav class="apps">
            <button aria-label="风扇"><svg viewBox="0 0 24 24"><path d="M12 12Q1 13 2 6t10-3zM12 12Q11 1 18 2t3 10zM12 12q11-1 10 6t-10 3zM12 12q1 11-6 10T3 12z" fill="#e8e8e8" stroke="#05090c"/></svg></button>
            <button aria-label="螺旋"><svg viewBox="0 0 24 24"><path d="M21 4q-6-1-10-1-7 1-8 8 0 8 8 9 7 0 8-7-1-6-7-5-5 1-4 5 2 4 6 2 3-3 0-4M19 6q-4-1-8 0-5 1-5 6" fill="none" stroke="#ddd" stroke-width="1.500"/></svg></button>
            <i></i>
            <button aria-label="Edge"><svg viewBox="0 0 24 24"><path d="M2 11Q4 2 13 2t9 11H9q0 5 6 5 3 0 6-2v4q-3 2-7 2-10 0-10-8 0-5 6-7-5 1-8 4zM9 10h7q0-4-3-4t-4 4z" fill="#0f78d8" fill-rule="evenodd"/></svg></button>
            <button aria-label="应用商店"><svg viewBox="0 0 24 24"><path d="M7 5q1-4 5-4t4 4" fill="none" stroke="#fff" stroke-width="1.500"/><path d="M2 6l20-2v20l-20-2z" fill="#fff"/><path d="M6 10l4-.5v4H6zM11 9.500l5-.5v4.500h-5zM6 14.500h4v4l-4-.5zM11 14.500h5V19l-5-.5z" fill="#000"/></svg></button>
            <button aria-label="资源管理器"><svg viewBox="0 0 24 24"><path d="M1 3h7l2 2h12v16H1z" fill="#fae090"/><path d="M2 3h6v2H2z" fill="#e0a838"/><path d="M5 14h14v8h-4v-4h-6v4H5z" fill="#3cace0"/></svg></button>
            <button class="current" aria-label="广联达"><svg><use href="#anchor"/></svg></button>
            <button class="running" aria-label="记事本"><svg viewBox="0 0 24 24"><rect width="24" height="24" rx="3" fill="#f4a020"/><path d="M4 4l14 2-2 15-12-2z" fill="#fff8e4"/><path d="M7 9h7M7 12h6M7 15h4" stroke="#555"/><path d="M21 3l-7 12" stroke="#9c3c1c" stroke-width="3"/></svg></button>
            <button class="running" aria-label="广联达G"><svg viewBox="0 0 24 24"><path d="M23 2q-7 2-10 1Q1 3 1 13t11 10q9-1 9-9 0-7-7-7-5 1-4 6 3-2 6 0 0 4-4 4-5-1-5-6 0-5 7-6Q20 6 23 2z" fill="#2ca0f0"/></svg></button>
            <button class="running" aria-label="浏览器"><svg viewBox="0 0 24 24"><circle cx="12" cy="12" r="10" fill="#54b82c" stroke="#e0f4d8" stroke-width="2"/><path d="M6 12h11q0-5-5-5t-6 5 6 5 5-2" fill="none" stroke="#fff" stroke-width="3"/><path d="M3 22Q2 20 5 18M14 3q7-3 7 0" fill="none" stroke="#2c9c1c" stroke-width="1.500"/></svg></button>
            <button class="running" aria-label="帮助"><svg viewBox="0 0 24 24"><path d="M4 9h9v13H4z" fill="#eee"/><path d="M6 12h5M6 15h5M6 18h5" stroke="#666"/><path d="M12 6q0-4 4-4t4 4-4 5v2M16 15v3" fill="none" stroke="#ffe600" stroke-width="3"/></svg></button>
        </nav>
        <div class="tray">
            <span class="cpu">26%<br>CPU使用</span>
            <svg viewBox="0 0 16 16"><path d="M2 11l6-6 6 6" fill="none" stroke="#fff" stroke-width="1.500"/></svg>
            <svg viewBox="0 0 16 16"><path d="M5 4.500h10v7H5z" fill="none" stroke="#fff"/><path d="M7 6h6v4H7z" fill="#fff"/><path d="M1 2v3M4 2v3M0 5h5v3H2v4h3" fill="none" stroke="#fff"/></svg>
            <svg viewBox="0 0 16 16"><path d="M2 14Q2 3 14 3M5 14q0-8 9-8M8 14q0-5 6-5" fill="none" stroke="#aaa" stroke-width="1.500"/><path d="M11 14q0-2 3-2v2z" fill="#fff"/></svg>
            <svg viewBox="0 0 16 16"><path d="M1 6h3l4-4v12l-4-4H1z" fill="none" stroke="#fff"/><path d="M10 6q1 2 0 4M12 4q3 4 0 8M14 2q4 6 0 12" fill="none" stroke="#ccc"/></svg>
            <svg class="kbd" viewBox="0 0 24 14"><path d="M1 1h22v12H1z" fill="none" stroke="#fff"/><path d="M3 4h18M3 7h18" stroke="#fff" stroke-dasharray="2 1"/><path d="M6 10h12" stroke="#fff"/></svg>
            <b class="lang">英</b>
            <svg class="sogou" viewBox="0 0 16 16"><path d="M0 2l13-2 3 14-13 2z" fill="#f4511e"/><path d="M12 4Q4 3 5 6q0 2 4 2t3 3-7 1" fill="none" stroke="#fff" stroke-width="2"/></svg>
            <span class="clock">22:06<br>2017/9/15</span>
            <svg class="notice" viewBox="0 0 26 26"><path d="M1 2h17v13H9l-4 4v-4H1z" fill="#fff"/><path d="M4 6h11M4 9h11M4 12h7" stroke="#000"/><circle cx="17" cy="18" r="7" fill="#444" stroke="#777"/><text x="14" y="22" font-size="11" font-weight="bold" fill="#fff">2</text></svg>
        </div>
    </footer>
</body>
</html>
```
FILE: styles.css
```css
* {
    box-sizing: border-box;
}
body {
    margin: 0;
    height: 100vh;
    display: flex;
    flex-direction: column;
    overflow: hidden;
    background: #f0f0f0;
    color: #000;
    font: 12px/16px "Noto Sans", "Noto Sans CJK SC", sans-serif;
}
button, input, select {
    font: inherit;
    color: inherit;
    margin: 0;
    padding: 0;
    border: 0;
    background: none;
}
a {
    color: inherit;
    text-decoration: none;
}
h1, h2 {
    margin: 0;
    font-size: 12px;
    font-weight: normal;
}
svg {
    flex: none;
    width: 16px;
    height: 16px;
}
.defs {
    position: absolute;
    width: 0;
    height: 0;
}

/* title bar */
.titlebar {
    display: flex;
    align-items: center;
    height: 24px;
    flex: none;
    padding-left: 2px;
    background: #fff;
}
.titlebar h1 {
    flex: 1;
    margin-left: 5px;
    white-space: nowrap;
}
.titlebar b {
    font-size: 13px;
    font-weight: normal;
}
.window-buttons {
    display: flex;
}
.window-buttons button {
    width: 46px;
    height: 22px;
}
.window-buttons svg {
    width: 12px;
    height: 12px;
}
.speed-ball {
    position: absolute;
    top: -30px;
    left: 573px;
    width: 48px;
    height: 48px;
    padding-top: 28px;
    border-radius: 50%;
    background: #43bf55;
    border: 1px solid #c8d8c8;
    box-shadow: 0 1px 4px #888;
    color: #fff;
    font-weight: bold;
    text-align: center;
}
.ime-bar {
    position: absolute;
    top: 3px;
    right: 166px;
    display: flex;
    align-items: center;
    justify-content: space-between;
    width: 185px;
    height: 24px;
    padding-right: 4px;
    border: 1px solid #b4c6dc;
    background: #fbfdff;
    color: #1f78d0;
    font-size: 14px;
}
.ime-bar .ime-logo {
    width: 28px;
    height: 28px;
    margin: -4px 0 0 -3px;
}

/* menu and toolbars */
.menubar {
    display: flex;
    align-items: center;
    gap: 1px;
    height: 28px;
    flex: none;
    padding-left: 2px;
    margin-bottom: 2px;
}
.menubar button {
    height: 26px;
    padding: 0 5px;
    white-space: nowrap;
}
.menubar .tool {
    padding: 0 3px 0 4px;
}
.tip {
    margin: 0 42px 0 37px;
    color: #2a6400;
    white-space: nowrap;
}
.more {
    align-self: flex-start;
    margin-left: auto;
    padding-right: 4px;
    font-size: 14px;
    line-height: 14px;
    font-weight: bold;
}
.top-row, .bar-row {
    display: flex;
    gap: 2px;
    flex: none;
}
.top-row {
    padding: 0 2px 2px 1px;
}
.toolbar {
    display: flex;
    align-items: center;
    height: 28px;
    padding-right: 2px;
    border-radius: 3px;
    background: linear-gradient(#fefefe, #f1f1f1);
    white-space: nowrap;
}
.file-bar {
    width: 150px;
}
.build-bar {
    width: 550px;
}
.view-bar, .grow {
    flex: 1;
}
.tool {
    display: flex;
    align-items: center;
    flex: none;
    gap: 4px;
    height: 26px;
    padding: 0 3px 0 4px;
}
.tool:hover {
    background: #e2eef9;
}
.tool:disabled {
    color: #8c8c8c;
}
.tool.active {
    background: #dfebf6;
    box-shadow: inset 0 0 0 1px #1080d8;
}
.tool.checked {
    background: #b0d4f2;
    box-shadow: inset 0 0 0 1px #1080d8;
}
.tool.plain {
    padding: 0 5px;
}
.caret {
    width: 6px;
    margin-left: 2px;
    border: 3px solid transparent;
    border-top-color: currentColor;
    border-bottom: 0;
}
.caret.tight {
    margin-left: -2px;
}
.sep {
    flex: none;
    width: 1px;
    height: 16px;
    margin: 0 2px 0 3px;
    background: #b4b4b4;
}
.grip {
    flex: none;
    width: 2px;
    height: 16px;
    margin: 0 1px 0 4px;
    background: repeating-linear-gradient(#b0b0b0 0 2px, transparent 2px 4px);
}
.combo {
    display: flex;
    align-items: center;
    flex: none;
    width: 69px;
    height: 22px;
    margin: 0 1px 0 2px;
    background: linear-gradient(90deg, #fff 0 calc(100% - 12px), #f4f4f4 0);
}
.combo::after {
    content: "";
    width: 0;
    margin-right: 3px;
    border: 3px solid transparent;
    border-top-color: #000;
    border-bottom: 0;
}
.combo select {
    flex: 1;
    width: 0;
    height: 20px;
    padding-left: 2px;
    appearance: none;
}
.combo.narrow {
    width: 57px;
}
.combo.with-icon {
    width: 62px;
    margin: 0;
    padding-left: 3px;
}
.combo.boxed {
    width: 55px;
    border: 1px solid #777;
    background: #f4f4f4;
}
.combo.boxed::after {
    border-top-color: #888;
}
.offset-bar {
    width: 361px;
    color: #8c8c8c;
}
.offset-bar .combo, .offset-bar .rotate, .offset-bar .more {
    color: #000;
}
.spin {
    display: flex;
    align-items: center;
    width: 58px;
    height: 22px;
    margin: 0 2px 0 4px;
    border: 1px solid #777;
}
.spin input {
    flex: 1;
    width: 0;
    text-align: right;
}
.spin svg {
    width: 8px;
    margin: 0 3px 0 8px;
}
.unit {
    margin-right: 4px;
}
.rotate {
    display: flex;
    align-items: center;
    gap: 8px;
}
input[type="checkbox"] {
    appearance: none;
    flex: none;
    width: 11px;
    height: 11px;
    border: 1px solid #888;
    background: #fff;
}
.blank-row .toolbar {
    height: 24px;
    width: 30px;
    margin-left: 413px;
}

/* module navigator */
main {
    flex: 1;
    min-height: 0;
    display: flex;
    gap: 5px;
}
.nav-panel {
    width: 216px;
    flex: none;
    display: flex;
    flex-direction: column;
}
.nav-panel h2 {
    display: flex;
    align-items: center;
    justify-content: space-between;
    height: 15px;
    padding-right: 2px;
    margin-bottom: 2px;
    background: #0054e3;
    color: #fff;
}
.nav-panel h2 svg {
    width: 32px;
    height: 12px;
}
.module {
    height: 22px;
    flex: none;
    border: 1px solid #a0a0a0;
    border-top-color: #fff;
    border-left-color: #c0c0c0;
    background: #f0f0f0;
    box-shadow: 0 -1px #a0a0a0;
}
.tree-tools {
    display: flex;
    align-items: center;
    gap: 7px;
    height: 27px;
    padding-left: 7px;
    background: linear-gradient(#fff, #ececec);
}
.tree-tools button, .tree-tools svg {
    display: block;
    width: 16px;
    height: 16px;
}
.tree-frame {
    flex: 1;
    min-height: 0;
    display: flex;
    margin: 0 1px 1px 2px;
    padding-right: 1px;
    border: 1px solid #828790;
    background: #fff;
    overflow: hidden;
}
.tree {
    flex: 1;
    margin: 0;
    padding: 1px 0 0;
    list-style: none;
    overflow: hidden;
}
.tree li {
    display: flex;
    align-items: center;
    height: 16px;
    padding-left: 40px;
    white-space: nowrap;
    background:
        repeating-linear-gradient(#888 0 1px, transparent 1px 2px) 12px 0 / 1px 16px no-repeat,
        repeating-linear-gradient(#888 0 1px, transparent 1px 2px) 31px 0 / 1px 16px no-repeat,
        repeating-linear-gradient(90deg, #888 0 1px, transparent 1px 2px) 31px 8px / 10px 1px no-repeat;
}
.tree li.end {
    background-size: 1px 16px, 1px 8px, 10px 1px;
}
.tree li.group {
    gap: 5px;
    padding-left: 7px;
    background: none;
}
.tree .fold {
    width: 10px;
    height: 10px;
    margin-right: 1px;
}
.tree a {
    display: flex;
    align-items: center;
    height: 16px;
    padding: 0 1px 0 2px;
}
.tree a > svg:first-child {
    margin-right: 5px;
}
.tree .selected {
    background: #d4d4d4;
}
.tree .new {
    width: 22px;
    height: 10px;
    align-self: flex-start;
}
.tree b, .statusbar b, th b {
    font: 10px "DejaVu Sans Mono", monospace;
}
.v-scroll {
    width: 15px;
    display: flex;
    flex-direction: column;
    background: #f0f0f0;
}
.v-scroll span {
    height: 225px;
    margin: auto 0 9px;
    background: #cdcdcd;
}

/* work area */
.work {
    flex: 1;
    min-width: 0;
    display: flex;
    flex-direction: column;
    gap: 1px;
}
.canvas {
    display: block;
    width: 100%;
    height: auto;
    flex: 1;
    min-height: 0;
    background: #000;
}
.rebar-panel {
    display: flex;
    height: 224px;
    flex: none;
}
.gutter {
    width: 13px;
    padding: 2px 1px;
    background: radial-gradient(circle, #bbb 1px, transparent 1px) 2px 2px / 5px 5px;
}
.gutter button, .gutter svg {
    display: block;
    width: 10px;
    height: 10px;
}
.rebar-body {
    flex: 1;
    min-width: 0;
    display: flex;
    flex-direction: column;
    padding: 0 2px 1px 0;
}
.total {
    margin-left: 4px;
}
.grid-frame {
    flex: 1;
    min-height: 0;
    display: flex;
    flex-direction: column;
    padding: 1px 1px 1px 0;
    border: 1px solid #a0a4a8;
    background: #fff;
    overflow: hidden;
}
table {
    width: 100%;
    table-layout: fixed;
    border-collapse: separate;
    border-spacing: 0;
}
.c-row { width: 33px; }
.c-name { width: 73px; }
.c-dia { width: 56px; }
.c-grade { width: 36px; }
.c-fig { width: 33px; }
.c-shape { width: 201px; }
.c-formula { width: 166px; }
.c-desc { width: 156px; }
.c-len { width: 61px; }
.c-count { width: 283px; }
th, td {
    height: 34px;
    padding: 0 0 0 1px;
    border: solid #c0c0c0;
    border-width: 0 1px 1px 0;
    text-align: left;
    white-space: nowrap;
    overflow: hidden;
    line-height: 12px;
}
th {
    padding: 0;
    background: linear-gradient(#fff, #ededed);
    font-weight: normal;
    text-align: center;
}
thead th {
    height: 19px;
}
tbody th {
    font: 10px "DejaVu Sans Mono", monospace;
}
td {
    background: #ccffda;
}
.blank td {
    background: #fff;
}
.blank th, .blank td {
    height: 19px;
}
th.current {
    background: #ffd088;
    color: #500050;
}
thead th.current {
    background: linear-gradient(#f9d9a0, #f0bc5c);
}
td:nth-child(2) {
    border-right-color: #000;
}
td.picked {
    background: #aeead9;
}
.mono, .shape {
    font-family: "DejaVu Sans Mono", monospace;
    font-size: 10px;
}
.center {
    text-align: center;
}
.grade {
    width: 12px;
    height: 12px;
}
.shape {
    display: flex;
    align-items: center;
    justify-content: center;
    gap: 8px;
    padding-right: 30px;
}
.shape svg {
    width: 36px;
    height: 24px;
}
.h-scroll {
    display: flex;
    height: 16px;
    margin-top: auto;
    background: #f0f0f0;
}
.h-scroll span {
    width: 480px;
    margin-right: auto;
    background: #cdcdcd;
}

/* floating control panel */
.float-panel {
    position: absolute;
    top: 198px;
    left: 179px;
    width: 167px;
    height: 178px;
    display: flex;
    flex-direction: column;
    border: 1px solid #9a9a9a;
    background: #fff;
    box-shadow: 1px 2px 8px rgba(0, 0, 0, 0.4);
}
.float-panel h2 {
    padding: 7px 8px 8px;
    color: #999;
}
.checks {
    flex: 1;
    margin: 0 1px 1px;
    padding-top: 2px;
    border: 1px solid #828790;
}
.checks label {
    display: flex;
    align-items: center;
    gap: 4px;
    height: 12px;
    padding-left: 3px;
}
.checks input::after {
    content: "";
    display: block;
    width: 5px;
    height: 2px;
    margin: 2px 0 0 1px;
    border-left: 1px solid #333;
    border-bottom: 1px solid #333;
    transform: rotate(-45deg);
}

/* status bar */
.statusbar {
    display: flex;
    gap: 3px;
    height: 22px;
    flex: none;
    padding: 2px 0 1px;
    background: #f8f8f8;
}
.statusbar span {
    padding-left: 1px;
    border: 1px solid #d4d4d4;
    background: #f5f5f5;
    white-space: nowrap;
}
.coords { width: 148px; }
.floor { width: 77px; }
.base { width: 97px; }
.count { width: 46px; }
.message { flex: 1; }
.fps { width: 70px; }

/* taskbar */
.taskbar {
    display: flex;
    align-items: stretch;
    height: 40px;
    flex: none;
    background: #02090c;
    color: #fff;
}
.start {
    width: 48px;
    background: #000;
}
.search {
    display: flex;
    align-items: center;
    width: 344px;
    padding: 0 14px 0 8px;
    background: #333;
}
.search input {
    flex: 1;
    padding-left: 6px;
    font-size: 14px;
}
.search input::placeholder {
    color: #9a9a9a;
}
.search .ring {
    width: 22px;
    height: 22px;
}
.search .mic {
    width: 12px;
    height: 18px;
}
.apps {
    display: flex;
    gap: 1px;
    padding-left: 2px;
}
.apps button {
    display: flex;
    align-items: center;
    justify-content: center;
    width: 48px;
}
.apps i {
    width: 3px;
}
.apps svg {
    width: 24px;
    height: 24px;
}
.apps .current {
    background: #333c40;
    box-shadow: inset 0 -2px #76b9ed;
}
.apps .running {
    background: linear-gradient(#76b9ed, #76b9ed) 4px 38px / 40px 2px no-repeat;
}
.tray {
    display: flex;
    align-items: center;
    gap: 8px;
    margin-left: auto;
    padding-right: 17px;
    line-height: 18px;
    text-align: center;
}
.cpu {
    margin-right: 10px;
}
.tray .kbd {
    width: 24px;
    height: 14px;
}
.tray .lang {
    font-weight: normal;
}
.tray .sogou {
    margin: 0 8px;
}
.tray .notice {
    width: 26px;
    height: 26px;
    margin-left: 12px;
}
```
